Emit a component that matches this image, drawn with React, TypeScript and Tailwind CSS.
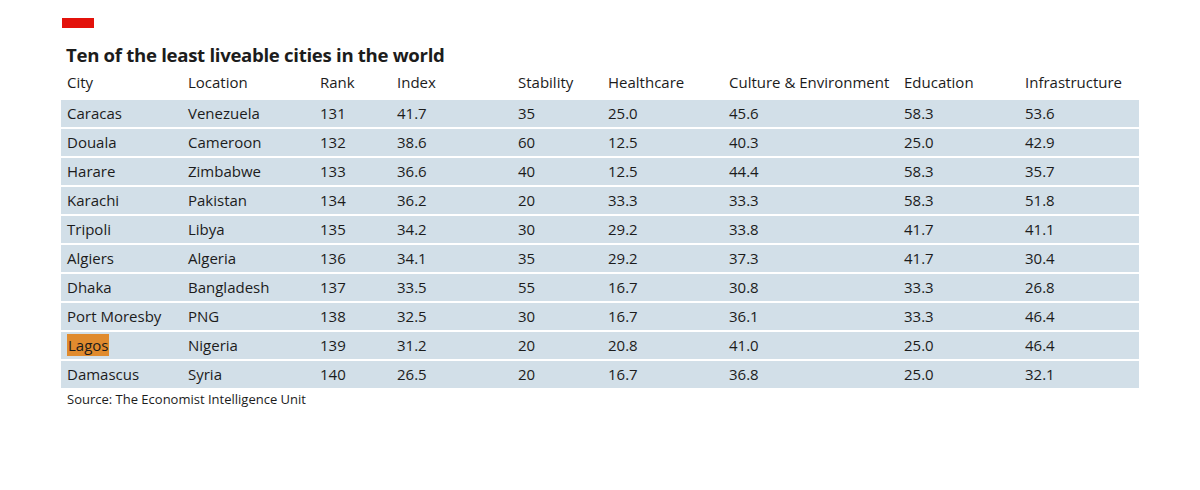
const cols = ["City", "Location", "Rank", "Index", "Stability", "Healthcare", "Culture & Environment", "Education", "Infrastructure"];

const rows = [
  ["Caracas", "Venezuela", "131", "41.7", "35", "25.0", "45.6", "58.3", "53.6"],
  ["Douala", "Cameroon", "132", "38.6", "60", "12.5", "40.3", "25.0", "42.9"],
  ["Harare", "Zimbabwe", "133", "36.6", "40", "12.5", "44.4", "58.3", "35.7"],
  ["Karachi", "Pakistan", "134", "36.2", "20", "33.3", "33.3", "58.3", "51.8"],
  ["Tripoli", "Libya", "135", "34.2", "30", "29.2", "33.8", "41.7", "41.1"],
  ["Algiers", "Algeria", "136", "34.1", "35", "29.2", "37.3", "41.7", "30.4"],
  ["Dhaka", "Bangladesh", "137", "33.5", "55", "16.7", "30.8", "33.3", "26.8"],
  ["Port Moresby", "PNG", "138", "32.5", "30", "16.7", "36.1", "33.3", "46.4"],
  ["Lagos", "Nigeria", "139", "31.2", "20", "20.8", "41.0", "25.0", "46.4"],
  ["Damascus", "Syria", "140", "26.5", "20", "16.7", "36.8", "25.0", "32.1"],
];

const grid = "grid grid-cols-[121px_132px_77px_121px_90px_121px_175px_121px_1fr] pl-[6px]";

export default function App() {
  return (
    <div className="w-[1200px] h-[490px] bg-white text-[#1c1c1c] font-['Open_Sans',sans-serif] pl-[61px] pt-[18px]">
      <div className="w-[32px] h-[10px] bg-[#e3120b] ml-[1px]" />
      <h1 className="mt-[14px] ml-[5px] text-[18.6px] leading-[26px] font-bold tracking-[-0.3px]">
        Ten of the least liveable cities in the world
      </h1>
      <div className="w-[1078px]">
        <div className={`${grid} h-[28px] items-center text-[15px]`}>
          {cols.map((c) => (
            <div key={c} className="whitespace-nowrap">{c}</div>
          ))}
        </div>
        <div className="flex flex-col gap-[2px] mt-[4px]">
          {rows.map((r) => (
            <div key={r[0]} className={`${grid} h-[27px] items-center bg-[#d2dfe8] text-[15px]`}>
              {r.map((v, i) => (
                <div key={i} className="whitespace-nowrap">
                  {v === "Lagos" ? <span className="bg-[#e08b2e] px-[1px] py-[1px]">{v}</span> : v}
                </div>
              ))}
            </div>
          ))}
        </div>
        <p className="ml-[6px] mt-[1px] text-[13px] leading-[20px]">Source: The Economist Intelligence Unit</p>
      </div>
    </div>
  );
}
